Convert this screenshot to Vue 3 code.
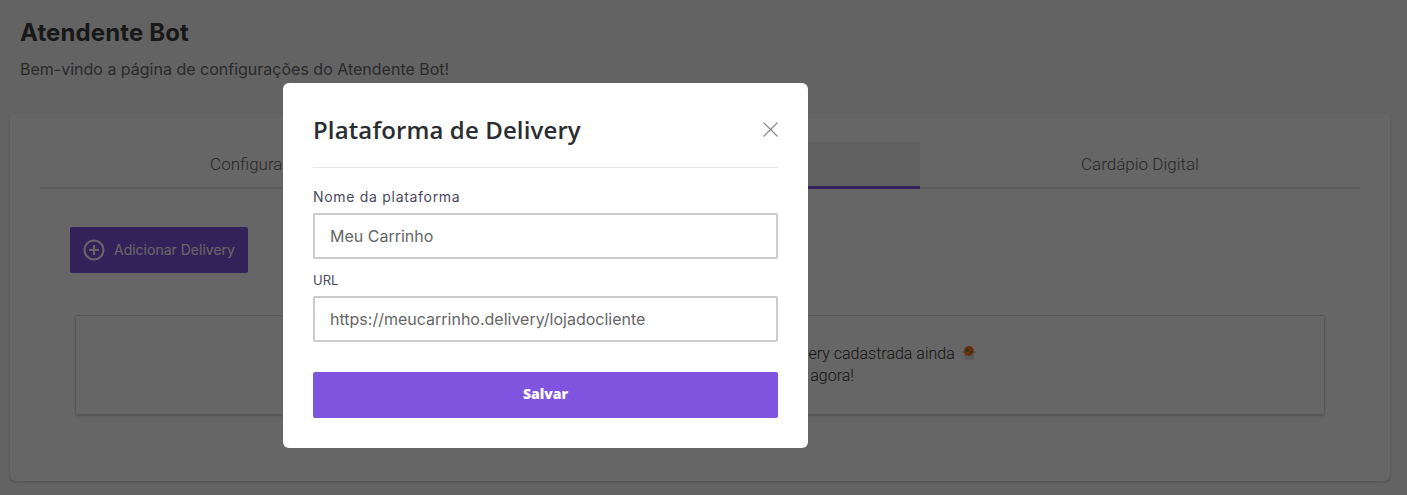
<template>
  <div class="page">
    <h1 class="page-title">Atendente Bot</h1>
    <p class="page-subtitle">Bem-vindo a página de configurações do Atendente Bot!</p>

    <div class="card">
      <div class="tabs">
        <div
          v-for="tab in tabs"
          :key="tab"
          class="tab"
          :class="{ active: tab === activeTab }"
        >
          {{ tab }}
        </div>
      </div>

      <button class="add-btn" type="button">
        <svg width="22" height="22" viewBox="0 0 22 22" fill="none" stroke="currentColor" stroke-width="2">
          <circle cx="11" cy="11" r="9.5" />
          <line x1="11" y1="6" x2="11" y2="16" />
          <line x1="6" y1="11" x2="16" y2="11" />
        </svg>
        <span>Adicionar Delivery</span>
      </button>

      <div class="empty-box">
        <p class="empty-line">
          Parece que você não tem nenhuma plataforma de delivery cadastrada ainda
          <svg class="pot" width="16" height="16" viewBox="0 0 16 16">
            <rect x="0.5" y="6" width="15" height="2" rx="1" fill="#cfcfcf" />
            <path d="M3 8h10v3.5A3.5 3.5 0 0 1 9.5 15h-3A3.5 3.5 0 0 1 3 11.5z" fill="#e4e4e4" />
            <circle cx="8" cy="6" r="5" fill="#ff7a2a" />
            <circle cx="6.5" cy="5" r="1.5" fill="#4d8a2a" />
            <circle cx="10" cy="7" r="1" fill="#4d8a2a" />
          </svg>
        </p>
        <p class="empty-line">Clique no botão acima, cadastre uma agora!</p>
      </div>
    </div>

    <div class="overlay">
      <div class="modal">
        <div class="modal-header">
          <h2 class="modal-title">Plataforma de Delivery</h2>
          <svg class="close-icon" width="15" height="15" viewBox="0 0 15 15" fill="none" stroke="#888" stroke-width="1.1">
            <line x1="0.5" y1="0.5" x2="14.5" y2="14.5" />
            <line x1="14.5" y1="0.5" x2="0.5" y2="14.5" />
          </svg>
        </div>

        <div class="field first">
          <label class="field-label">Nome da plataforma</label>
          <input v-model="name" class="field-input" type="text" />
        </div>

        <div class="field">
          <label class="field-label">URL</label>
          <input v-model="url" class="field-input" type="text" />
        </div>

        <button class="save-btn" type="button">Salvar</button>
      </div>
    </div>
  </div>
</template>

<script setup>
import { ref } from 'vue'

const tabs = ['Configuração', 'Plataforma de Delivery', 'Cardápio Digital']
const activeTab = 'Plataforma de Delivery'

const name = ref('Meu Carrinho')
const url = ref('https://meucarrinho.delivery/lojadocliente')
</script>

<style>
html, body {
  margin: 0;
  background: #f8f8f8;
}
</style>

<style scoped>
.page {
  position: relative;
  box-sizing: border-box;
  height: 495px;
  padding: 18px 17px 14px 10px;
  overflow: hidden;
  background: #f8f8f8;
  font-family: Inter, sans-serif;
}

.page-title {
  margin: 0 0 0 10px;
  font-size: 24px;
  line-height: 30px;
  font-weight: 700;
  letter-spacing: 0.12px;
  color: #403c3c;
}

.page-subtitle {
  margin: 11px 0 0 10px;
  font-size: 16px;
  line-height: 20px;
  color: #6b6b6b;
}

.card {
  box-sizing: border-box;
  height: 368px;
  margin-top: 34px;
  padding: 29px 30px 0;
  background: #fff;
  border-radius: 6px;
  box-shadow: 0 1px 3px rgba(0, 0, 0, 0.2);
}

.tabs {
  display: grid;
  grid-template-columns: repeat(3, 1fr);
  border-bottom: 2px solid #e6e6e6;
}

.tab {
  height: 45px;
  line-height: 45px;
  text-align: center;
  font-family: Roboto, sans-serif;
  font-size: 17px;
  font-weight: 300;
  color: #666;
}

.tab.active {
  margin-bottom: -2px;
  height: 44px;
  background: #f2f2f2;
  border-bottom: 3px solid #7f55e0;
}

.add-btn {
  display: flex;
  align-items: center;
  gap: 9px;
  width: 178px;
  height: 46px;
  margin: 38px 0 0 30px;
  padding: 0 0 1px 13px;
  border: none;
  border-radius: 2px;
  background: #7f55e0;
  color: #fff;
  font-family: Inter, sans-serif;
  font-size: 14px;
  font-weight: 400;
}

.empty-box {
  box-sizing: border-box;
  height: 100px;
  margin: 42px 35px 0;
  padding-top: 27px;
  border: 1px solid #ddd;
  border-radius: 2px;
  box-shadow: 0 1px 2px rgba(0, 0, 0, 0.2);
  text-align: center;
}

.empty-line {
  margin: 0;
  font-family: Roboto, sans-serif;
  font-size: 16px;
  font-weight: 300;
  line-height: 22px;
  color: #333;
}

.pot {
  vertical-align: -2px;
  margin-left: 2px;
}

.overlay {
  position: absolute;
  inset: 0;
  padding: 83px 0 0 283px;
  background: rgba(0, 0, 0, 0.6);
}

.modal {
  box-sizing: border-box;
  width: 525px;
  height: 365px;
  padding: 0 30px;
  background: #fff;
  border-radius: 6px;
}

.modal-header {
  box-sizing: border-box;
  display: flex;
  align-items: center;
  justify-content: space-between;
  height: 85px;
  padding-top: 8px;
  border-bottom: 1px solid #e6e6e6;
}

.modal-title {
  margin: 0;
  font-family: "Open Sans", sans-serif;
  font-size: 24px;
  font-weight: 600;
  letter-spacing: 0.12px;
  color: #2a2d31;
}

.field {
  margin-top: 11px;
}

.field.first {
  margin-top: 19px;
}

.field-label {
  display: block;
  height: 26px;
  line-height: 20px;
  font-family: Inter, sans-serif;
  font-size: 13px;
  color: #4a4a60;
}

.field.first .field-label {
  font-size: 14px;
  letter-spacing: 0.7px;
}

.field-input {
  display: block;
  box-sizing: border-box;
  width: 100%;
  height: 46px;
  padding: 0 15px;
  border: 2px solid #ccc;
  border-radius: 2px;
  outline: none;
  background: #fff;
  font-family: Inter, sans-serif;
  font-size: 16px;
  color: #666;
}

.save-btn {
  display: block;
  width: 100%;
  height: 46px;
  margin-top: 30px;
  padding: 0 0 4px;
  border: none;
  border-radius: 2px;
  background: #7f55e0;
  color: #fff;
  font-family: "Open Sans", sans-serif;
  font-size: 14px;
  font-weight: 800;
}
</style>
